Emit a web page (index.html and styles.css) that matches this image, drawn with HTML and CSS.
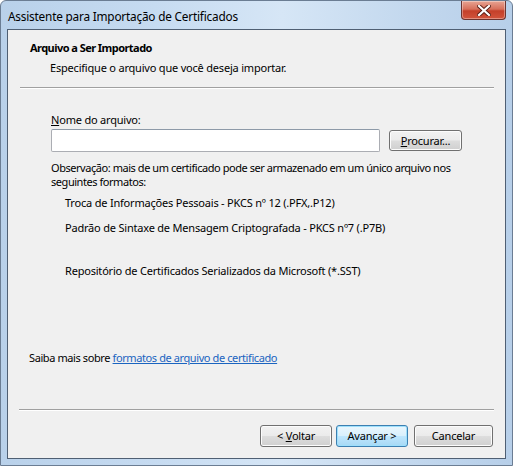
FILE: index.html
```html
<!DOCTYPE html>
<html>
<head>
<meta charset="utf-8">
<link rel="stylesheet" href="styles.css">
</head>
<body>
<div class="window">
  <div class="titlebar">
    <span class="title">Assistente para Importação de Certificados</span>
    <div class="close"><svg width="14" height="11" viewBox="0 0 14 11"><path d="M2 1 L12 10 M12 1 L2 10" stroke="#5a1d14" stroke-width="4" stroke-linecap="square"/><path d="M2 1 L12 10 M12 1 L2 10" stroke="#ffffff" stroke-width="2.2" stroke-linecap="square"/></svg></div>
  </div>
  <div class="client">
    <div class="header">
      <div class="h-title">Arquivo a Ser Importado</div>
      <div class="h-sub">Especifique o arquivo que você deseja importar.</div>
    </div>
    <div class="sep"></div>
    <div class="body">
      <div class="label"><u>N</u>ome do arquivo:</div>
      <div class="filerow">
        <div class="textbox"></div>
        <div class="btn browse"><span><u>P</u>rocurar...</span></div>
      </div>
      <div class="note">Observação: mais de um certificado pode ser armazenado em um único arquivo nos<br>seguintes formatos:</div>
      <div class="fmt f1">Troca de Informações Pessoais - PKCS nº 12 (.PFX,.P12)</div>
      <div class="fmt f2">Padrão de Sintaxe de Mensagem Criptografada - PKCS nº7 (.P7B)</div>
      <div class="fmt f3">Repositório de Certificados Serializados da Microsoft (*.SST)</div>
      <div class="more">Saiba mais sobre <a class="link">formatos de arquivo de certificado</a></div>
    </div>
    <div class="sep bottom"></div>
    <div class="footer">
      <div class="btn"><span>&lt; <u>V</u>oltar</span></div>
      <div class="btn default"><span>Avançar &gt;</span></div>
      <div class="btn cancel"><span>Cancelar</span></div>
    </div>
  </div>
</div>
</body>
</html>
```
FILE: styles.css
```css
* { box-sizing: border-box; }
html, body { margin: 0; padding: 0; }
body {
  width: 513px; height: 466px; overflow: hidden;
  font-family: "Noto Sans", "Open Sans", sans-serif;
  font-size: 11px; letter-spacing: -0.2px; color: #000;
  background: #fff;
}
.window {
  width: 513px; height: 466px;
  display: flex; flex-direction: column;
  background: linear-gradient(90deg, #b9d1ea 0%, #c6dbf1 30%, #d6e6f6 55%, #c3d8ee 80%, #b7cfe9 100%);
  border: 1px solid #6b7d93;
  border-radius: 6px 6px 0 0;
}
.titlebar {
  height: 28px; flex: none;
  display: flex; justify-content: space-between; align-items: flex-start;
  padding-left: 7px;
}
.title { font-size: 11.8px; line-height: 14px; padding-top: 8px; color: #000; }
.close {
  width: 45px; height: 19px; margin-right: 6px;
  border: 1px solid #6b3430; border-top: none;
  border-radius: 0 0 4px 4px;
  background: linear-gradient(#e8a493 0%, #d7705b 45%, #c4402a 55%, #d2543c 100%);
  display: flex; align-items: center; justify-content: center;
  box-shadow: inset 0 0 0 1px rgba(255,255,255,0.35);
}
.client {
  flex: 1; margin: 0 6px 6px 6px;
  background: #f0f0f0;
  border: 1px solid #4f5f73;
  display: flex; flex-direction: column;
}
.header { padding: 11px 0 0 22px; height: 57px; }
.h-title { font-weight: bold; line-height: 14px; letter-spacing: -0.55px; }
.h-sub { margin-top: 6px; padding-left: 20px; line-height: 14px; }
.sep { height: 2px; margin: 0 11px 0 12px; border-top: 1px solid #a0a0a0; border-bottom: 1px solid #fff; }
.body { flex: 1; padding: 24px 0 0 43px; position: relative; }
.label { line-height: 14px; }
.filerow { display: flex; align-items: center; margin-top: 2px; }
.textbox { width: 329px; height: 23px; background: #fff; border: 1px solid #abadb3; border-top-color: #8d9aa8; border-radius: 2px; }
.btn {
  height: 22px; border: 1px solid #707070; border-radius: 3px;
  background: linear-gradient(#f2f2f2 0%, #ebebeb 48%, #dddddd 52%, #cfcfcf 100%);
  box-shadow: inset 0 0 0 1px #fcfcfc;
  display: flex; align-items: center; justify-content: center;
  line-height: 14px;
}
.browse { width: 73px; margin-left: 9px; height: 21px; }
.note { margin-top: 9px; line-height: 14px; white-space: nowrap; letter-spacing: -0.45px; }
.fmt { padding-left: 14px; line-height: 14px; }
.f1 { margin-top: 7px; }
.f2 { margin-top: 11px; }
.f3 { margin-top: 29px; }
.more { position: absolute; left: 21px; top: 262px; line-height: 14px; letter-spacing: -0.4px; }
.link { color: #1a64c0; text-decoration: underline; }
.sep.bottom { margin: 0 11px 0 11px; }
.footer { height: 47px; display: flex; justify-content: flex-end; padding: 14px 12px 0 0; gap: 4px; }
.footer .btn { width: 72px; }
.footer .btn.default { border-color: #3c7fb1; box-shadow: inset 0 0 0 1px #9ee0fc; background: linear-gradient(#eaf6fd 0%, #d9f0fc 48%, #bee6fd 52%, #a7d9f5 100%); }
.footer .btn.cancel { width: 79px; margin-left: 2px; }
```
